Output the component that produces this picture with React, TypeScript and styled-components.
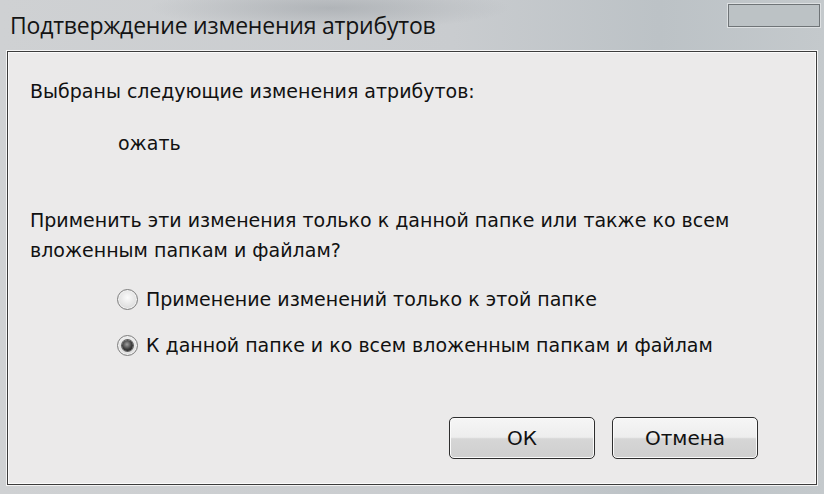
import React, { useState } from "react";
import styled, { createGlobalStyle } from "styled-components";

const GlobalStyle = createGlobalStyle`
  html, body {
    margin: 0;
    padding: 0;
  }
  body {
    width: 824px;
    height: 494px;
    overflow: hidden;
    background: #c3c7ca;
  }
`;

const Window = styled.div`
  width: 824px;
  height: 494px;
  display: flex;
  flex-direction: column;
  background:
    radial-gradient(ellipse 180px 22px at 330px 8px, rgba(150, 155, 160, 0.5), transparent),
    radial-gradient(ellipse 140px 20px at 1000px 30px, rgba(150, 155, 160, 0.4), transparent),
    linear-gradient(90deg, #cfd1d3 0%, #c9cccf 55%, #bcc2c6 80%, #c4c9cc 100%);
  box-sizing: border-box;
`;

const TitleBar = styled.div`
  height: 51px;
  flex: none;
  display: flex;
  justify-content: space-between;
  align-items: flex-start;
  padding: 0 4px 0 10px;
  box-sizing: border-box;
`;

const Title = styled.div`
  font-family: "Open Sans", "Noto Sans", sans-serif;
  font-size: 23px;
  color: #141414;
  line-height: 50px;
  letter-spacing: -0.2px;
`;

const CloseBox = styled.div`
  margin-top: 4px;
  width: 92px;
  height: 23px;
  border: 1px solid #6f7477;
  background: #bcc2c5;
  box-shadow: 0 0 0 1px #dde0e2;
  box-sizing: border-box;
`;

const Client = styled.div`
  margin-left: 7px;
  width: 810px;
  height: 434px;
  flex: none;
  background: #ebeaea;
  border: 1px solid #3c3c3c;
  box-shadow: 0 0 0 1px #f4f4f4, inset 0 0 0 1px #fbfbfb;
  box-sizing: border-box;
  display: flex;
  flex-direction: column;
  padding: 24px 0 0 22px;
  font-family: "DejaVu Sans", Verdana, sans-serif;
  font-size: 19px;
  color: #111;
`;

const Line = styled.div<{ $indent?: number; $gap?: number }>`
  line-height: 30px;
  margin-left: ${(p) => p.$indent ?? 0}px;
  margin-top: ${(p) => p.$gap ?? 0}px;
`;

const Options = styled.div`
  display: flex;
  flex-direction: column;
  gap: 16px;
  margin: 19px 0 0 87px;
`;

const OptionRow = styled.label`
  display: flex;
  align-items: center;
  gap: 8px;
  line-height: 30px;
  cursor: default;
`;

const RadioCircle = styled.span<{ $checked: boolean }>`
  width: 21px;
  height: 21px;
  border-radius: 50%;
  border: 1px solid #7e7e7e;
  box-sizing: border-box;
  background: radial-gradient(circle at 50% 40%, #fbfbfb 0%, #e2e2e2 60%, #c4c4c4 100%);
  box-shadow: inset 0 0 0 1px #f2f2f2;
  display: flex;
  align-items: center;
  justify-content: center;
  flex: none;

  &::after {
    content: "";
    display: ${(p) => (p.$checked ? "block" : "none")};
    width: 11px;
    height: 11px;
    border-radius: 50%;
    background: radial-gradient(circle at 45% 40%, #a0a0a0 0%, #3a3a3a 55%, #181818 100%);
    box-shadow: 0 0 0 1px #5e5e5e;
  }
`;

const ButtonRow = styled.div`
  display: flex;
  justify-content: flex-end;
  gap: 17px;
  margin-top: auto;
  padding: 0 58px 25px 0;
`;

const Button = styled.button`
  width: 146px;
  height: 42px;
  border: 1px solid #2e2e2e;
  border-radius: 5px;
  background: linear-gradient(180deg, #f6f6f6 0%, #ededed 48%, #d6d6d6 52%, #cfcfcf 100%);
  box-shadow: inset 0 0 0 1px #fbfbfb;
  font-family: "DejaVu Sans", Verdana, sans-serif;
  font-size: 20px;
  color: #111;
  padding: 0;
`;

const options = [
  "Применение изменений только к этой папке",
  "К данной папке и ко всем вложенным папкам и файлам",
];

export default function App() {
  const [choice, setChoice] = useState(1);

  return (
    <>
      <GlobalStyle />
      <Window>
        <TitleBar>
          <Title>Подтверждение изменения атрибутов</Title>
          <CloseBox />
        </TitleBar>
        <Client>
          <Line>Выбраны следующие изменения атрибутов:</Line>
          <Line $indent={88} $gap={22}>ожать</Line>
          <Line $gap={47}>Применить эти изменения только к данной папке или также ко всем</Line>
          <Line>вложенным папкам и файлам?</Line>
          <Options>
            {options.map((text, i) => (
              <OptionRow key={text} onClick={() => setChoice(i)}>
                <RadioCircle $checked={choice === i} />
                {text}
              </OptionRow>
            ))}
          </Options>
          <ButtonRow>
            <Button>ОК</Button>
            <Button>Отмена</Button>
          </ButtonRow>
        </Client>
      </Window>
    </>
  );
}
